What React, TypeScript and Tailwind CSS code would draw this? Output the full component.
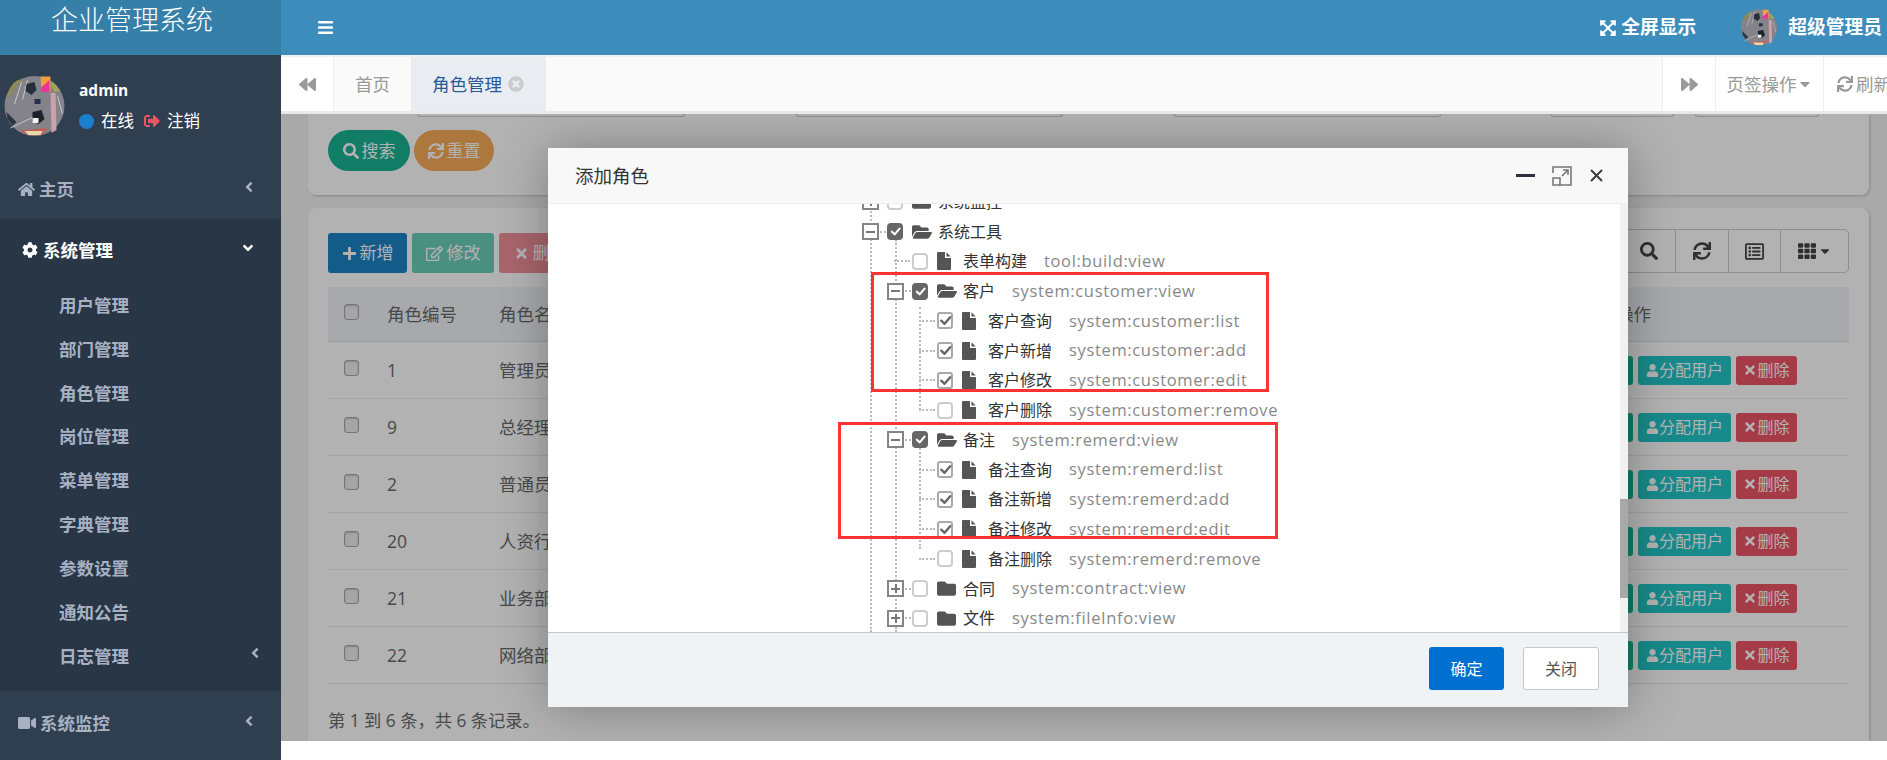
import React from "react";
import {
  FaHome, FaCog, FaVideo, FaSearch, FaSync, FaPlus, FaRegEdit, FaTimes, FaUser, FaBars,
  FaExpandArrowsAlt, FaBackward, FaForward, FaSignOutAlt, FaTimesCircle, FaAngleLeft,
  FaAngleDown, FaRegListAlt, FaTh, FaCaretDown, FaFolder, FaFolderOpen,
} from "react-icons/fa";

function Avatar({ className }: { className: string }) {
  return (
    <svg viewBox="0 0 60 60" className={className}>
      <circle cx="30" cy="30" r="30" fill="#85838a" />
      <path d="M9 7A30 30 0 0 1 18 2.5L2 24A30 30 0 0 1 9 7Z" fill="#8d8a55" />
      <path d="M36 0.5H46V16H37Z" fill="#f0a040" />
      <path d="M36 12L45 4V16H37Z" fill="#e8359a" />
      <path d="M47 5A30 30 0 0 1 56 15L50 16L47 10Z" fill="#a7a25a" />
      <path d="M46 17H51L52 54L47 57Z" fill="#c9a3a8" />
      <path d="M17 6L10 28M23 4L18 24M31 40L6 52M53 20L58 38" stroke="#c8c8cc" strokeWidth="1" fill="none" />
      <path d="M22 8L30 6L32 14L27 19L21 15Z" fill="#26303c" />
      <rect x="30" y="23" width="6" height="5" fill="#22304a" />
      <path d="M28 36L37 34L40 43L34 48L28 46Z" fill="#1c222b" />
      <rect x="28" y="42" width="6" height="5" fill="#f4f0ee" />
      <path d="M2 36L12 46L8 50L3 43Z" fill="#2d3540" />
      <path d="M16 54.5L43 52L38 58.5A30 30 0 0 1 22 58.5Z" fill="#c65b58" />
      <path d="M20 55H38L36 59H24Z" fill="#e7d9a8" />
    </svg>
  );
}

function Check({ className }: { className: string }) {
  return (
    <svg viewBox="0 0 16 16" className={className} fill="none" stroke="currentColor" strokeWidth="2.6" strokeLinecap="round" strokeLinejoin="round">
      <path d="M3.5 8.2L7 11.5L13 4.5" />
    </svg>
  );
}

function CheckBox({ state }: { state: "full" | "on" | "off" }) {
  if (state === "full")
    return (
      <span className="flex h-[17px] w-[16px] shrink-0 items-center justify-center rounded-[4px] bg-[#666]">
        <Check className="h-[13px] w-[13px] text-white" />
      </span>
    );
  if (state === "on")
    return (
      <span className="flex h-[17px] w-[16px] shrink-0 items-center justify-center rounded-[3px] border-2 border-[#aaa] bg-white">
        <Check className="h-[15px] w-[15px] shrink-0 text-[#666]" />
      </span>
    );
  return <span className="h-[17px] w-[16px] shrink-0 rounded-[4px] border-2 border-[#ccc] bg-white" />;
}

function Switch({ open }: { open: boolean }) {
  return (
    <span className="relative z-10 flex h-[17px] w-[17px] shrink-0 items-center justify-center border-2 border-[#858585] bg-white">
      <span className="absolute h-[2px] w-[9px] bg-[#777]" />
      {!open && <span className="absolute h-[9px] w-[2px] bg-[#777]" />}
    </span>
  );
}

function FileIcon() {
  return (
    <svg viewBox="0 0 14 18" className="h-[18px] w-[14px]" fill="#555">
      <path d="M0 1A1 1 0 0 1 1 0H8V6H14V17A1 1 0 0 1 13 18H1A1 1 0 0 1 0 17Z" />
      <path d="M9.5 0.3L13.7 4.5H9.5Z" />
    </svg>
  );
}

type Node = { label: string; perm?: string; depth: 1 | 2 | 3; kind: "open" | "closed" | "leaf"; state: "full" | "on" | "off" };

const treeRows: Node[] = [
  { label: "系统监控", depth: 1, kind: "closed", state: "off" },
  { label: "系统工具", depth: 1, kind: "open", state: "full" },
  { label: "表单构建", perm: "tool:build:view", depth: 2, kind: "leaf", state: "off" },
  { label: "客户", perm: "system:customer:view", depth: 2, kind: "open", state: "full" },
  { label: "客户查询", perm: "system:customer:list", depth: 3, kind: "leaf", state: "on" },
  { label: "客户新增", perm: "system:customer:add", depth: 3, kind: "leaf", state: "on" },
  { label: "客户修改", perm: "system:customer:edit", depth: 3, kind: "leaf", state: "on" },
  { label: "客户删除", perm: "system:customer:remove", depth: 3, kind: "leaf", state: "off" },
  { label: "备注", perm: "system:remerd:view", depth: 2, kind: "open", state: "full" },
  { label: "备注查询", perm: "system:remerd:list", depth: 3, kind: "leaf", state: "on" },
  { label: "备注新增", perm: "system:remerd:add", depth: 3, kind: "leaf", state: "on" },
  { label: "备注修改", perm: "system:remerd:edit", depth: 3, kind: "leaf", state: "on" },
  { label: "备注删除", perm: "system:remerd:remove", depth: 3, kind: "leaf", state: "off" },
  { label: "合同", perm: "system:contract:view", depth: 2, kind: "closed", state: "off" },
  { label: "文件", perm: "system:fileInfo:view", depth: 2, kind: "closed", state: "off" },
];

function TreeRow({ n }: { n: Node }) {
  const indent = n.depth === 1 ? "pl-[314px]" : n.depth === 2 ? "pl-[339px]" : "pl-[364px]";
  return (
    <div className={`flex h-[29.75px] items-center ${indent}`}>
      <span className="flex w-[25px] shrink-0 items-center">
        {n.kind === "leaf" ? (
          <span className="ml-[7px] w-[16px] border-t-2 border-dotted border-[#bbb]" />
        ) : (
          <>
            <Switch open={n.kind === "open"} />
            <span className="ml-px w-[6px] border-t-2 border-dotted border-[#bbb]" />
          </>
        )}
      </span>
      <CheckBox state={n.state} />
      <span className="ml-[9px] flex w-[26px] shrink-0 items-center">
        {n.kind === "leaf" ? (
          <FileIcon />
        ) : n.kind === "open" ? (
          <FaFolderOpen className="text-[20px] text-[#555]" />
        ) : (
          <FaFolder className="text-[19px] text-[#555]" />
        )}
      </span>
      <span className="text-[16px] text-[#333]">{n.label}</span>
      {n.perm && <span className="ml-[17px] text-[16.5px] tracking-[0.65px] text-[#888]">{n.perm}</span>}
    </div>
  );
}

const subMenu = ["用户管理", "部门管理", "角色管理", "岗位管理", "菜单管理", "字典管理", "参数设置", "通知公告", "日志管理"];

function Sidebar() {
  return (
    <aside className="flex h-full w-[281px] shrink-0 flex-col bg-[#2f3f50]">
      <div className="flex h-[55px] shrink-0 justify-center bg-[#367fa9] pt-[2px] pr-[17px] text-[27px] leading-[36px] font-light text-white">
        企业管理系统
      </div>
      <div className="flex h-[95px] shrink-0 items-start pt-[21px] pl-[4px]">
        <Avatar className="h-[60px] w-[61px] shrink-0" />
        <div className="ml-[14px] flex flex-col pt-px">
          <span className="text-[15.5px] leading-[26px] font-bold text-white">admin</span>
          <span className="mt-[5px] flex items-center text-[16.5px] leading-[26px] text-white">
            <span className="h-[15px] w-[15px] rounded-full bg-[#1c80cf]" />
            <span className="ml-[7px]">在线</span>
            <FaSignOutAlt className="ml-[10px] text-[16px] text-[#ed5565]" />
            <span className="ml-[7px]">注销</span>
          </span>
        </div>
      </div>
      <div className="flex h-[69px] shrink-0 items-center pt-[9px] pl-[18px] text-[17.5px] font-bold text-[#a7b1c2]">
        <FaHome className="text-[17px]" />
        <span className="ml-[4px]">主页</span>
        <FaAngleLeft className="mt-[-5px] mr-[24px] ml-auto text-[16px]" />
      </div>
      <div className="flex h-[472px] shrink-0 flex-col bg-[#283646]">
        <div className="flex h-[64px] shrink-0 items-center pb-[2px] pl-[22px] text-[17.5px] font-bold text-white">
          <FaCog className="text-[16px]" />
          <span className="ml-[5px]">系统管理</span>
          <FaAngleDown className="mt-[-4px] mr-[25px] ml-auto text-[16px]" />
        </div>
        {subMenu.map((s, i) => (
          <div key={s} className="flex h-[43.9px] shrink-0 items-center pl-[59px] text-[17.5px] font-bold whitespace-nowrap text-[#a7b1c2]">
            {s}
            {i === 8 && <FaAngleLeft className="mt-[-6px] mr-[18px] ml-auto text-[16px]" />}
          </div>
        ))}
      </div>
      <div className="flex h-[69px] shrink-0 items-center pb-[5px] pl-[18px] text-[17.5px] font-bold text-[#a7b1c2]">
        <FaVideo className="text-[18px]" />
        <span className="ml-[4px]">系统监控</span>
        <FaAngleLeft className="mt-[-4px] mr-[24px] ml-auto text-[16px]" />
      </div>
    </aside>
  );
}

function TopBar() {
  return (
    <header className="flex h-[55px] shrink-0 items-center bg-[#3c8dbc] text-white">
      <FaBars className="ml-[36px] text-[17px]" />
      <FaExpandArrowsAlt className="ml-auto text-[18px]" />
      <span className="ml-[4px] text-[18.75px] font-bold">全屏显示</span>
      <Avatar className="ml-[45px] h-[37px] w-[36px]" />
      <span className="mr-[5px] ml-[11px] text-[18.75px] font-bold">超级管理员</span>
    </header>
  );
}

function TabBar() {
  return (
    <nav className="flex h-[59px] shrink-0 flex-col border-t-2 border-[#f0f0f0] bg-[#fafafa]">
      <div className="flex h-[54px] text-[#999]">
        <div className="flex w-[53px] items-center justify-center border-r border-[#eee] bg-white">
          <FaBackward className="text-[17px]" />
        </div>
        <div className="flex w-[77px] items-center justify-center text-[17.5px]">首页</div>
        <div className="flex w-[135px] items-center bg-[#e9edf2] pl-[21px] text-[17.5px] text-[#2a5a96]">
          角色管理
          <FaTimesCircle className="ml-[6px] text-[16px] text-[#ccc]" />
        </div>
        <div className="ml-auto flex w-[54px] items-center justify-center border-x border-[#eee] bg-white">
          <FaForward className="text-[17px]" />
        </div>
        <div className="flex w-[108px] items-center justify-center border-r border-[#eee] bg-white text-[17.5px] text-[#999]">
          页签操作
          <FaCaretDown className="text-[16px]" />
        </div>
        <div className="flex w-[63px] items-center overflow-hidden bg-white pl-[13px] text-[17.5px] whitespace-nowrap">
          <FaSync className="shrink-0 text-[16px]" />
          <span className="ml-[3px] shrink-0">刷新</span>
        </div>
      </div>
      <div className="h-[3px] bg-[#e7eaec]" />
    </nav>
  );
}

function ToolIcon({ children, w }: { children: React.ReactNode; w: string }) {
  return <div className={`flex h-full items-center justify-center border-l border-[#ccc] text-[#444] ${w}`}>{children}</div>;
}

const rows = [
  ["1", "管理员"],
  ["9", "总经理"],
  ["2", "普通员工"],
  ["20", "人资行政"],
  ["21", "业务部"],
  ["22", "网络部"],
];

function RowCheck() {
  return <span className="h-[16px] w-[15px] rounded-[3px] border border-[#aaa] bg-[#eee] shadow-[inset_0_1px_2px_rgba(0,0,0,.2)]" />;
}

function PageBehind() {
  return (
    <div className="flex h-full flex-col bg-[#f3f3f4] pr-[18px] pl-[27px]">
      <section className="h-[81px] shrink-0 rounded-b-[8px] bg-white pl-[20px] shadow-[1px_1px_3px_rgba(0,0,0,.2)]">
        <div className="flex h-[16px] items-start">
          <span className="ml-[89px] h-[3px] w-[268px] rounded-b border-x border-b border-[#ccc]" />
          <span className="ml-[111px] h-[3px] w-[267px] rounded-b border-x border-b border-[#ccc]" />
          <span className="ml-[111px] h-[3px] w-[267px] rounded-b border-x border-b border-[#ccc]" />
          <span className="ml-[110px] h-[3px] w-[123px] rounded-b border-x border-b border-[#ccc]" />
          <span className="ml-[21px] h-[3px] w-[124px] rounded-b border-x border-b border-[#ccc]" />
        </div>
        <div className="flex gap-[4px] text-[17px] text-white">
          <span className="flex h-[41px] w-[82px] items-center justify-center gap-[3px] rounded-full bg-[#1ab394]"><FaSearch className="text-[16px]" />搜索</span>
          <span className="flex h-[41px] w-[80px] items-center justify-center gap-[3px] rounded-full bg-[#f8ac59]"><FaSync className="text-[16px]" />重置</span>
        </div>
      </section>
      <section className="mt-[13px] flex-1 rounded-t-[8px] bg-white px-[20px] pt-[21px] shadow-[1px_1px_3px_rgba(0,0,0,.2)]">
        <div className="flex h-[44px] items-end text-[17px] text-white">
          <span className="flex h-[40px] w-[79px] items-center justify-center gap-[3px] rounded-[3px] bg-[#1c84c6]"><FaPlus className="text-[15px]" />新增</span>
          <span className="ml-[5px] flex h-[40px] w-[82px] items-center justify-center gap-[4px] rounded-[3px] bg-[#1ab394]/65"><FaRegEdit className="text-[17px]" />修改</span>
          <span className="ml-[5px] flex h-[40px] w-[82px] items-center justify-center gap-[4px] rounded-[3px] bg-[#ed5565]/65"><FaTimes className="text-[15px]" />删除</span>
          <div className="ml-auto flex h-[44px] w-[254px] items-center rounded-r-[5px] border border-[#ccc]">
            <ToolIcon w="w-[53px] border-l-0 ml-auto"><FaSearch className="text-[18px]" /></ToolIcon>
            <ToolIcon w="w-[53px]"><FaSync className="text-[18px]" /></ToolIcon>
            <ToolIcon w="w-[52px]"><FaRegListAlt className="text-[19px]" /></ToolIcon>
            <ToolIcon w="w-[68px]"><FaTh className="text-[18px]" /><FaCaretDown className="ml-[2px] text-[14px]" /></ToolIcon>
          </div>
        </div>
        <div className="mt-[14px] text-[17.5px] text-[#676a6c]">
          <div className="flex h-[55px] items-center border-b border-[#dfe2e5] bg-[#eff3f8]">
            <span className="mt-[-5px] flex w-[59px] pl-[16px]"><RowCheck /></span>
            <span className="w-[112px]">角色编号</span>
            <span className="w-[500px]">角色名称</span>
            <span className="ml-[617px]">操作</span>
          </div>
          {rows.map((r) => (
            <div key={r[0]} className="flex h-[57px] items-center border-b border-[#e7eaec]">
              <span className="mt-[-5px] flex w-[59px] pl-[16px]"><RowCheck /></span>
              <span className="w-[112px]">{r[0]}</span>
              <span className="w-[500px]">{r[1]}</span>
              <span className="ml-[554px] flex gap-[5px] text-[16px] text-white">
                <span className="h-[29px] w-[80px] rounded-[3px] bg-[#1ab394]" />
                <span className="flex h-[29px] w-[93px] items-center justify-center rounded-[3px] bg-[#23c6c8]"><FaUser className="text-[13px]" />分配用户</span>
                <span className="flex h-[29px] w-[61px] items-center justify-center rounded-[3px] bg-[#ed5565]"><FaTimes className="text-[14px]" />删除</span>
              </span>
            </div>
          ))}
          <div className="mt-[24px] text-[17.25px]">第 1 到 6 条，共 6 条记录。</div>
        </div>
      </section>
    </div>
  );
}

function Modal() {
  return (
    <div className="absolute top-[34px] left-[267px] flex h-[559px] w-[1080px] flex-col rounded-[2px] bg-white shadow-[1px_1px_50px_rgba(0,0,0,.3)]">
      <div className="flex h-[56px] shrink-0 items-center border-b border-[#eee] bg-[#f8f8f8] pl-[27px] text-[18.5px] text-[#333]">
        添加角色
        <span className="ml-auto h-[3px] w-[19px] bg-[#2f2e3e]" />
        <svg viewBox="0 0 20 20" className="ml-[17px] h-[20px] w-[20px]" fill="none" stroke="#777" strokeWidth="1.6">
          <path d="M7 1H19V19H7M1 7V1H7" />
          <path d="M1 12H8V19H1Z" />
          <path d="M10 10L16 4M11 4H16V9" />
        </svg>
        <svg viewBox="0 0 13 13" className="mr-[25px] ml-[18px] h-[13px] w-[13px]" fill="none" stroke="#3a3a46" strokeWidth="2">
          <path d="M1 1L12 12M12 1L1 12" />
        </svg>
      </div>
      <div className="relative flex min-h-0 flex-1">
        <div className="relative min-w-0 flex-1 overflow-hidden">
          <span className="absolute top-0 bottom-0 left-[322px] border-l-2 border-dotted border-[#bbb]" />
          <span className="absolute top-[36px] bottom-0 left-[347px] border-l-2 border-dotted border-[#bbb]" />
          <span className="absolute top-[103px] left-[371px] h-[103px] border-l-2 border-dotted border-[#bbb]" />
          <span className="absolute top-[241px] left-[371px] h-[104px] border-l-2 border-dotted border-[#bbb]" />
          <div className="relative mt-[-17px]">
            {treeRows.map((n) => (
              <TreeRow key={n.label} n={n} />
            ))}
          </div>
        </div>
        <div className="relative w-[8px] shrink-0 bg-[#f1f1f1]">
          <div className="mt-[295px] h-[99px] bg-[#a8a8a8]" />
        </div>
      </div>
      <div className="flex h-[75px] shrink-0 items-start justify-end gap-[19px] border-t border-[#c4c8cc] bg-[#eff3f6] pt-[14px] pr-[29px] text-[16px]">
        <span className="flex h-[43px] w-[75px] items-center justify-center rounded-[3px] bg-[#0070d0] text-white">确定</span>
        <span className="flex h-[43px] w-[76px] items-center justify-center rounded-[3px] border border-[#c4c8cc] bg-white text-[#555]">关闭</span>
      </div>
    </div>
  );
}

export default function App() {
  return (
    <div className="relative flex h-[760px] w-[1887px] overflow-hidden bg-white font-['Open_Sans','Noto_Sans_CJK_SC',sans-serif]">
      <Sidebar />
      <main className="flex min-w-0 flex-1 flex-col">
        <TopBar />
        <TabBar />
        <div className="relative h-[627px] shrink-0 overflow-hidden">
          <PageBehind />
          <div className="absolute inset-0 bg-black/30" />
          <Modal />
        </div>
      </main>
      <div className="pointer-events-none absolute top-[272px] left-[871px] h-[120px] w-[398px] border-[3px] border-[#ff3333]" />
      <div className="pointer-events-none absolute top-[422px] left-[838px] h-[117px] w-[440px] border-[3px] border-[#ff3333]" />
    </div>
  );
}
